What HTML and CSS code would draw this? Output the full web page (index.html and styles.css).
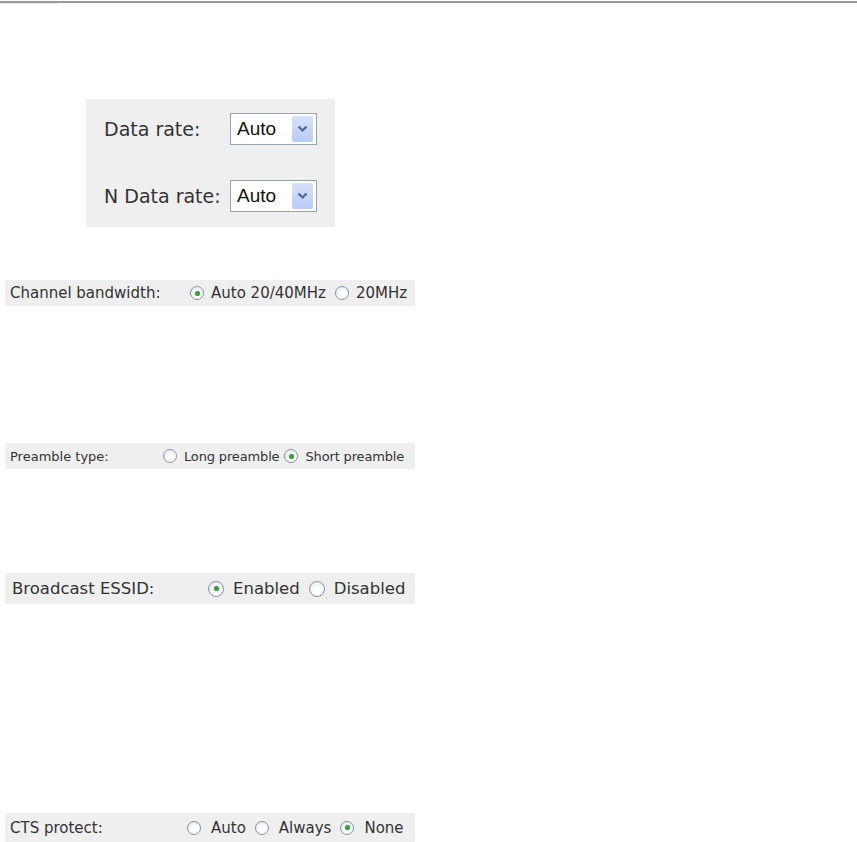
FILE: index.html
```html
<!DOCTYPE html>
<html lang="en">
<head>
<meta charset="UTF-8">
<meta name="viewport" content="width=device-width, initial-scale=1.0">
<title>Wireless settings</title>
<link rel="stylesheet" href="styles.css">
</head>
<body>

    <div class="rule"></div>
    <div class="rule-sub"></div>

    <!-- data rate selects -->
    <div class="rate-box">
        <div class="rate-row">
            <span class="rate-label">Data rate:</span>
            <div class="select">
                <span>Auto</span>
                <span class="select-btn">
                    <svg width="11" height="8" viewBox="0 0 11 8"><polyline points="1.5,1.5 5.5,5.5 9.5,1.5" fill="none" stroke="#4a6898" stroke-width="2.2"/></svg>
                </span>
            </div>
        </div>
        <div class="rate-row">
            <span class="rate-label">N Data rate:</span>
            <div class="select">
                <span>Auto</span>
                <span class="select-btn">
                    <svg width="11" height="8" viewBox="0 0 11 8"><polyline points="1.5,1.5 5.5,5.5 9.5,1.5" fill="none" stroke="#4a6898" stroke-width="2.2"/></svg>
                </span>
            </div>
        </div>
    </div>

    <div class="strip strip-channel">
        <span class="strip-label">Channel bandwidth:</span>
        <span class="opt"><span class="radio on"></span>Auto 20/40MHz</span>
        <span class="opt"><span class="radio"></span>20MHz</span>
    </div>

    <div class="strip strip-preamble">
        <span class="strip-label">Preamble type:</span>
        <span class="opt"><span class="radio"></span>Long preamble</span>
        <span class="opt"><span class="radio on"></span>Short preamble</span>
    </div>

    <div class="strip strip-essid">
        <span class="strip-label">Broadcast ESSID:</span>
        <span class="opt"><span class="radio on"></span>Enabled</span>
        <span class="opt"><span class="radio"></span>Disabled</span>
    </div>

    <div class="strip strip-cts">
        <span class="strip-label">CTS protect:</span>
        <span class="opt"><span class="radio"></span>Auto</span>
        <span class="opt"><span class="radio"></span>Always</span>
        <span class="opt"><span class="radio on"></span>None</span>
    </div>

</body>
</html>
```

FILE: styles.css
```css
body {
    font-family: "DejaVu Sans", Verdana, sans-serif;
    margin: 0;
    padding: 0;
    background-color: #fff;
    color: #333;
}
.rule {
    height: 2px;
    margin-top: 1px;
    background-color: #999;
}
.rule-sub {
    width: 58px;
    height: 1px;
    background-color: #e6e6e6;
}

/* data rate box */
.rate-box {
    width: 231px;
    height: 114px;
    margin: 95px 0 0 86px;
    padding: 14px 0 0 18px;
    background-color: #efefef;
    display: flex;
    flex-direction: column;
    gap: 35px;
}
.rate-row {
    display: flex;
    align-items: center;
}
.rate-label {
    width: 126px;
    font-size: 19px;
    color: #333;
    white-space: nowrap;
}
.select {
    width: 87px;
    height: 32px;
    border: 1px solid #9aa2aa;
    background-color: #fff;
    display: flex;
    align-items: center;
    justify-content: space-between;
    font-family: "Liberation Sans", Arial, sans-serif;
    font-size: 19px;
    color: #111;
    padding-left: 6px;
    box-sizing: border-box;
}
.select-btn {
    width: 21px;
    height: 26px;
    margin-right: 3px;
    background: linear-gradient(#d6e2fb, #b7cbf4);
    border-radius: 2px;
    display: flex;
    align-items: center;
    justify-content: center;
}

/* option strips */
.strip {
    width: 410px;
    margin-left: 5px;
    background-color: #efefef;
    display: flex;
    align-items: center;
    box-sizing: border-box;
    padding-left: 5px;
    white-space: nowrap;
}
.strip-label {
    flex-shrink: 0;
}
.opt {
    display: inline-flex;
    align-items: center;
    flex-shrink: 0;
}
.radio {
    position: relative;
    flex-shrink: 0;
    border-radius: 50%;
    border: 1px solid #8594a4;
    background: radial-gradient(circle at 60% 65%, #fff 30%, #dde2e8 100%);
    box-sizing: border-box;
}
.radio.on::after {
    content: '';
    position: absolute;
    top: 50%;
    left: 50%;
    width: 5px;
    height: 5px;
    margin: -2.5px 0 0 -2.5px;
    border-radius: 50%;
    background-color: #3f9f3f;
    box-shadow: 0 0 1px #6fc06f;
}

.strip-channel {
    height: 26px;
    margin-top: 53px;
    font-size: 15px;
}
.strip-channel .strip-label { width: 180px; }
.strip-channel .opt { gap: 7px; margin-right: 9px; }
.strip-channel .radio { width: 14px; height: 14px; }

.strip-preamble {
    height: 26px;
    margin-top: 137px;
    font-size: 13px;
}
.strip-preamble .strip-label { width: 153px; }
.strip-preamble .opt { gap: 7px; margin-right: 5px; letter-spacing: -0.15px; }
.strip-preamble .radio { width: 14px; height: 14px; }

.strip-essid {
    height: 31px;
    margin-top: 104px;
    font-size: 16.5px;
    padding-left: 7px;
}
.strip-essid .strip-label { width: 196px; }
.strip-essid .opt { gap: 9px; margin-right: 9px; }
.strip-essid .radio { width: 16px; height: 16px; }

.strip-cts {
    height: 29px;
    margin-top: 209px;
    font-size: 15px;
}
.strip-cts .strip-label { width: 177px; }
.strip-cts .opt { gap: 10px; margin-right: 9px; }
.strip-cts .radio { width: 14px; height: 14px; }
```
